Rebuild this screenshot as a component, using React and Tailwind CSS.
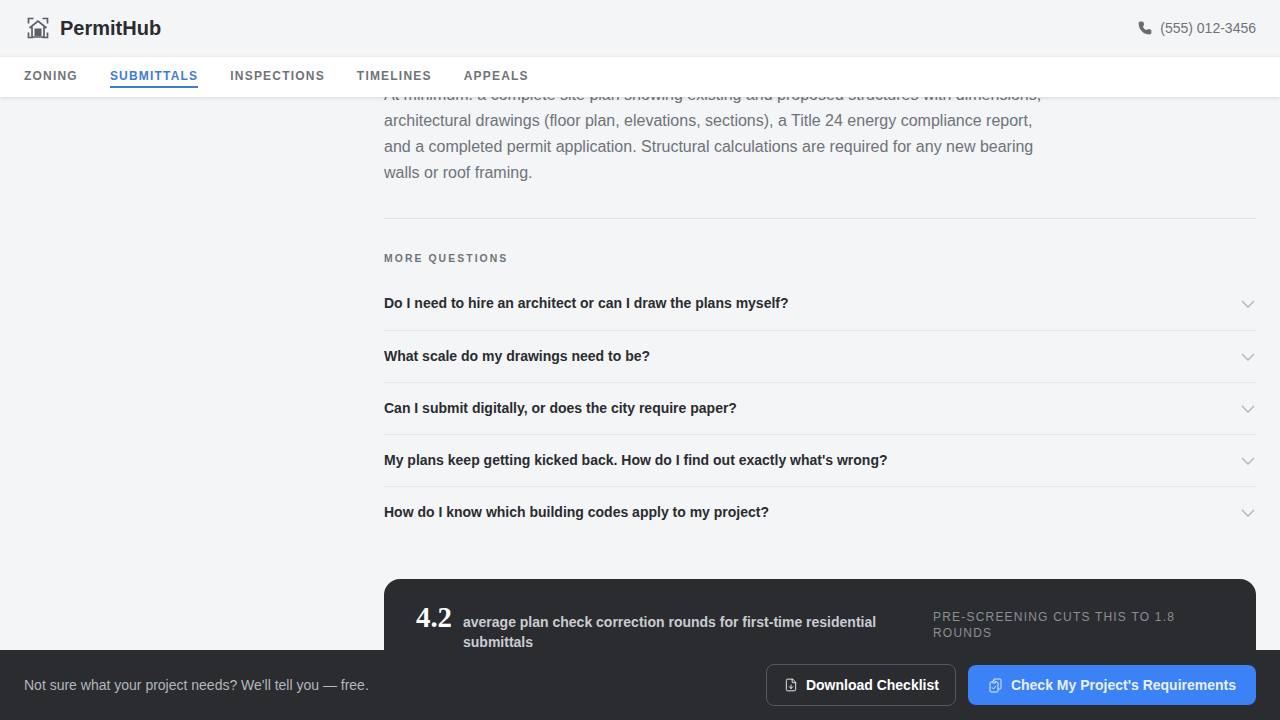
import { FileDown, Phone } from "lucide-react";

const navItems = ["Zoning", "Submittals", "Inspections", "Timelines", "Appeals"];

const questions = [
  "Do I need to hire an architect or can I draw the plans myself?",
  "What scale do my drawings need to be?",
  "Can I submit digitally, or does the city require paper?",
  "My plans keep getting kicked back. How do I find out exactly what's wrong?",
  "How do I know which building codes apply to my project?",
];

const Logo = () => (
  <svg width="22" height="22" viewBox="0 0 22 22" fill="none" stroke="#5a5e64" strokeWidth="1.7">
    <path d="M1.5 6.5V1.5H6.5M15.5 1.5h5v5M1.5 15.5v5H6.5M15.5 20.5h5v-5" />
    <path d="M2.5 11 11 4l8.5 7" />
    <path d="M5 10v10h12V10" />
    <rect x="7.5" y="11.5" width="7" height="7.5" fill="#5a5e64" stroke="none" />
  </svg>
);

const Chevron = () => (
  <svg width="16" height="16" viewBox="0 0 16 16" fill="none" stroke="#aeb2b8" strokeWidth="1.25">
    <path d="m2 6 6 6 6-6" />
  </svg>
);

const ClipboardIcon = () => (
  <svg width="15" height="15" viewBox="0 0 15 15" fill="none" stroke="#dbeafe" strokeWidth="1">
    <path d="M4.5 4H3a1 1 0 0 0-1 1v8a1 1 0 0 0 1 1h6a1 1 0 0 0 1-1V5a1 1 0 0 0-1-1H7.5" />
    <rect x="4.5" y="3" width="3" height="2" rx="0.4" />
    <path d="M5.5 3V2a1 1 0 0 1 1-1H12a1 1 0 0 1 1 1v8a1 1 0 0 1-1 1h-2" />
    <path d="m4 9.5 1.5 1.5L8 8" />
  </svg>
);

export default function App() {
  return (
    <div className="relative h-screen overflow-hidden bg-[#f3f5f7] font-['Liberation_Sans',sans-serif]">
      {/* Top header */}
      <header className="flex h-[57px] items-center justify-between bg-[#f3f5f7] px-6 pb-[2px]">
        <div className="flex items-center gap-[11px] pl-[3px]">
          <Logo />
          <span className="text-[20px] font-bold text-[#2a2c2f]">PermitHub</span>
        </div>
        <div className="flex items-center gap-2 text-sm text-[#6f7379]">
          <Phone size={14} fill="#696d73" stroke="#696d73" />
          <span>(555) 012-3456</span>
        </div>
      </header>

      {/* Tabs */}
      <nav className="relative z-10 flex h-10 items-start gap-8 bg-white px-6 shadow-[0_1px_4px_rgba(0,0,0,0.12)]">
        {navItems.map((item) => (
          <a
            key={item}
            className={
              item === "Submittals"
                ? "mt-[12px] border-b-2 border-[#3f7bd6] pb-[2px] text-xs font-bold uppercase leading-[15px] tracking-[1.2px] text-[#3f7bd6]"
                : "mt-[12px] pb-[2px] text-xs font-bold uppercase leading-[15px] tracking-[1.2px] text-[#6f7379]"
            }
          >
            {item}
          </a>
        ))}
      </nav>

      {/* Scrolled content */}
      <main className="-mt-[15px] pl-[384px] pr-6">
        <p className="w-[672px] text-base leading-[26px] text-[#6f7379]">
          At minimum: a complete site plan showing existing and proposed structures with dimensions,
          architectural drawings (floor plan, elevations, sections), a Title 24 energy compliance
          report, and a completed permit application. Structural calculations are required for any
          new bearing walls or roof framing.
        </p>

        <div className="mt-[32px] border-t border-[#dfe2e6] pt-[33px]">
          <h3 className="text-[10.4px] font-bold uppercase leading-[13px] tracking-[0.2em] text-[#6f7379]">
            More Questions
          </h3>
          <div className="mt-[14px]">
            {questions.map((q) => (
              <div
                key={q}
                className="flex h-[52px] items-center justify-between border-b border-[#e5e7eb] pb-[2px] first:pb-1 last:border-b-0"
              >
                <span className="text-sm font-bold text-[#2a2c2f]">{q}</span>
                <Chevron />
              </div>
            ))}
          </div>
        </div>

        <section className="mt-[40px] flex items-start rounded-2xl bg-[#2a2c2f] px-8 pb-6 pt-[22px]">
          <span className="font-['Liberation_Serif',serif] text-[28.8px] font-bold leading-[32px] text-white">
            4.2
          </span>
          <p className="ml-[11px] mt-[11px] w-[430px] text-sm font-bold leading-5 text-[#c9ccd1]">
            average plan check correction rounds for first-time residential submittals
          </p>
          <p className="ml-[40px] mt-[8px] w-[290px] text-xs uppercase leading-4 tracking-[1.2px] text-[#8b8f96]">
            Pre-screening cuts this to 1.8 rounds
          </p>
        </section>
      </main>

      {/* Fixed bottom bar */}
      <div className="fixed inset-x-0 bottom-0 z-20 flex h-[70px] items-center justify-between bg-[#2a2c2f] px-6">
        <p className="text-sm text-[#b4b7bc]">Not sure what your project needs? We'll tell you — free.</p>
        <div className="flex items-center gap-3">
          <button className="flex h-[42px] items-center gap-2 rounded-lg border border-[#55585e] pl-[17px] pr-4 text-sm font-bold text-white">
            <FileDown size={14} strokeWidth={1.5} />
            Download Checklist
          </button>
          <button className="flex h-10 items-center gap-2 rounded-lg bg-[#3b82f6] px-5 text-sm font-bold text-[#e8f0fe]">
            <ClipboardIcon />
            Check My Project's Requirements
          </button>
        </div>
      </div>
    </div>
  );
}
